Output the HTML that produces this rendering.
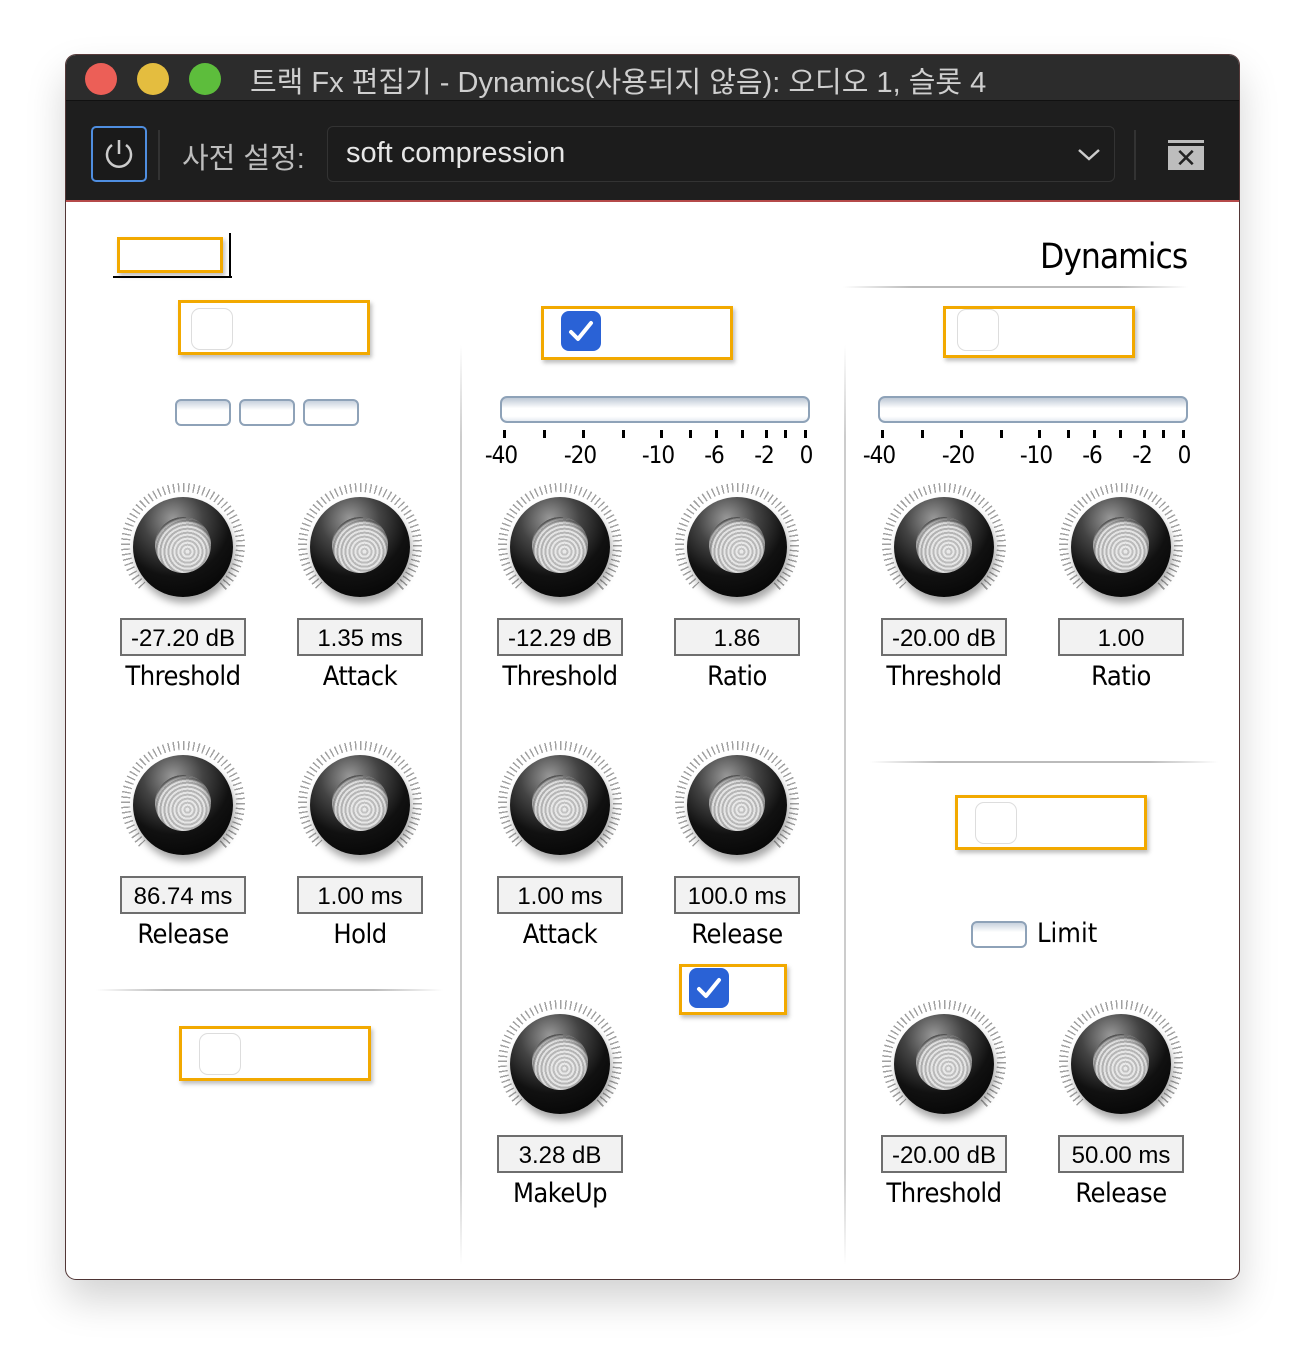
<!DOCTYPE html>
<html><head><meta charset="utf-8"><style>
*{box-sizing:border-box;margin:0;padding:0}
body{width:1305px;height:1357px;background:#fff;position:relative;overflow:hidden;font-family:"Liberation Sans","Noto Sans CJK KR",sans-serif}
.a{position:absolute}
.win{left:66px;top:55px;width:1173px;height:1224px;border-radius:10px;background:#fff;box-shadow:0 20px 40px rgba(0,0,0,.18),0 0 0 1px #5a3c3c;overflow:hidden}
.title{left:0;top:0;width:1173px;height:46px;background:#2c2c2c;border-bottom:1px solid #111}
.tool{left:0;top:46px;width:1173px;height:101px;background:#1e1e1e;border-bottom:2px solid #b54a4a}
.dot{width:32px;height:32px;border-radius:50%;top:8px}
.k{width:124px;height:124px;border-radius:50%;
background:conic-gradient(transparent 0 138deg,#fff 138deg 222deg,transparent 222deg),repeating-conic-gradient(#a0a0a0 0 1.4deg,transparent 1.4deg 5deg)}
.k::before{content:"";position:absolute;left:9px;top:9px;width:106px;height:106px;border-radius:50%;background:#fff}
.k .b{position:absolute;left:12px;top:14px;width:100px;height:100px;border-radius:50%;
background:radial-gradient(circle at 40% 22%,#9a9a9a 0,#444 30%,#111 58%,#000 100%);box-shadow:2px 6px 8px rgba(0,0,0,.35)}
.k .i{position:absolute;left:22px;top:20px;width:56px;height:56px;border-radius:50%;
background:radial-gradient(circle at 55% 60%,rgba(255,255,255,.35) 0,rgba(255,255,255,0) 70%),repeating-radial-gradient(circle at 58% 62%,#e0e0e0 0 2px,#a8a8a8 2px 4px);box-shadow:inset 0 3px 5px rgba(0,0,0,.6)}
.v{width:126px;height:38px;border:2px solid #6e6e6e;background:#f2f2f2;font-size:24px;text-align:center;line-height:38px;color:#000}
.l{width:180px;text-align:center;font-size:27px;color:#000;font-family:"DejaVu Sans Condensed","Liberation Sans Narrow","Liberation Sans",sans-serif;letter-spacing:-0.5px}
.ob{border:3px solid #f2a900;box-shadow:2px 3px 4px rgba(0,0,0,.25)}
.cb{width:42px;height:42px;border-radius:9px;border:1px solid #ddd;background:#fff}
.cc{width:40px;height:40px;border-radius:8px;background:#2a62d6}
.btn{height:27px;border-radius:6px;border:2px solid #8ea2b8;background:linear-gradient(#c8d2de,#fff 40%,#fff)}
.bar{height:27px;border-radius:7px;border:2px solid #8ea2b8;background:linear-gradient(#bfc9d6,#fff 45%,#fff 80%,#e6ebf1)}
.tk{width:3px;height:8px;background:#000;top:430px}
.sl{font-size:24px;top:441px;width:50px;text-align:center;font-family:"DejaVu Sans Condensed","Liberation Sans",sans-serif;letter-spacing:-1px}
.hl{height:2px;background:linear-gradient(90deg,#fff,#bbb 20%,#bbb 80%,#fff)}
.vl{width:2px;background:linear-gradient(#fff,#ccc 10%,#ccc 90%,#fff)}
</style></head><body>
<div class="a win">
 <div class="a title"></div>
 <div class="a dot" style="left:19px;background:#ec5f57"></div>
 <div class="a dot" style="left:71px;background:#e4bd3f"></div>
 <div class="a dot" style="left:123px;background:#5dbd3c"></div>
 <div class="a" style="left:184px;top:4px;font-size:29px;color:#cfcfcf;white-space:nowrap">트랙 Fx 편집기 - Dynamics(사용되지 않음): 오디오 1, 슬롯 4</div>
 <div class="a tool"></div>
 <div class="a" style="left:25px;top:71px;width:56px;height:56px;border:2px solid #4f8ee0;border-radius:5px;background:#1a1a1a"></div>
 <svg class="a" style="left:35px;top:81px" width="36" height="36" viewBox="0 0 36 36"><path d="M11 9 A12 12 0 1 0 25 9" fill="none" stroke="#ccc" stroke-width="2.5"/><line x1="18" y1="4" x2="18" y2="18" stroke="#ccc" stroke-width="2.5"/></svg>
 <div class="a" style="left:92px;top:75px;width:2px;height:50px;background:#333"></div>
 <div class="a" style="left:116px;top:80px;font-size:29px;color:#bdbdbd">사전 설정:</div>
 <div class="a" style="left:261px;top:71px;width:788px;height:56px;border:1px solid #333;border-radius:6px;background:#1c1c1c"></div>
 <div class="a" style="left:280px;top:82px;font-size:29px;color:#e6e6e6">soft compression</div>
 <svg class="a" style="left:1010px;top:92px" width="26" height="16"><path d="M3 3 L13 12 L23 3" fill="none" stroke="#ccc" stroke-width="2.5"/></svg>
 <div class="a" style="left:1068px;top:75px;width:2px;height:50px;background:#333"></div>
 <div class="a" style="left:1102px;top:85px;width:36px;height:3px;background:#bbb"></div>
 <div class="a" style="left:1102px;top:91px;width:36px;height:24px;background:#bdbdbd;text-align:center;font-size:26px;line-height:24px;color:#222">✕</div>
</div>

<div class="a ob" style="left:117px;top:237px;width:106px;height:36px"></div>
<div class="a" style="left:113px;top:276px;width:119px;height:2px;background:#000"></div>
<div class="a" style="left:229px;top:233px;width:2px;height:45px;background:#000"></div>
<div class="a" style="left:1040px;top:237px;font-size:35px;font-family:'DejaVu Sans Condensed','Liberation Sans',sans-serif;letter-spacing:-1px">Dynamics</div>
<div class="a hl" style="left:843px;top:286px;width:345px"></div>

<div class="a ob" style="left:178px;top:300px;width:192px;height:55px"></div>
<div class="a cb" style="left:191px;top:308px"></div>
<div class="a ob" style="left:541px;top:306px;width:192px;height:54px"></div>
<div class="a cc" style="left:561px;top:311px"><svg width="40" height="40"><path d="M10 21 L17 28 L30 12" fill="none" stroke="#fff" stroke-width="4" stroke-linecap="round" stroke-linejoin="round"/></svg></div>
<div class="a ob" style="left:943px;top:306px;width:192px;height:52px"></div>
<div class="a cb" style="left:957px;top:309px"></div>

<div class="a btn" style="left:175px;top:399px;width:56px"></div>
<div class="a btn" style="left:239px;top:399px;width:56px"></div>
<div class="a btn" style="left:303px;top:399px;width:56px"></div>

<div class="a vl" style="left:460px;top:345px;height:920px"></div>
<div class="a vl" style="left:844px;top:345px;height:920px"></div>
<div class="a hl" style="left:96px;top:989px;width:347px"></div>
<div class="a hl" style="left:870px;top:761px;width:348px"></div>

<div class="a bar" style="left:500px;top:396px;width:310px"></div>
<div class="a bar" style="left:878px;top:396px;width:310px"></div>

<div class="a tk" style="left:503px"></div><div class="a tk" style="left:543px"></div><div class="a tk" style="left:582px"></div><div class="a tk" style="left:622px"></div><div class="a tk" style="left:660px"></div><div class="a tk" style="left:689px"></div><div class="a tk" style="left:715px"></div><div class="a tk" style="left:741px"></div><div class="a tk" style="left:765px"></div><div class="a tk" style="left:784px"></div><div class="a tk" style="left:804px"></div>
<div class="a sl" style="left:476px">-40</div><div class="a sl" style="left:555px">-20</div><div class="a sl" style="left:633px">-10</div><div class="a sl" style="left:689px">-6</div><div class="a sl" style="left:739px">-2</div><div class="a sl" style="left:781px">0</div>
<div class="a tk" style="left:881px"></div><div class="a tk" style="left:921px"></div><div class="a tk" style="left:960px"></div><div class="a tk" style="left:1000px"></div><div class="a tk" style="left:1038px"></div><div class="a tk" style="left:1067px"></div><div class="a tk" style="left:1093px"></div><div class="a tk" style="left:1119px"></div><div class="a tk" style="left:1143px"></div><div class="a tk" style="left:1162px"></div><div class="a tk" style="left:1182px"></div>
<div class="a sl" style="left:854px">-40</div><div class="a sl" style="left:933px">-20</div><div class="a sl" style="left:1011px">-10</div><div class="a sl" style="left:1067px">-6</div><div class="a sl" style="left:1117px">-2</div><div class="a sl" style="left:1159px">0</div>

<div class="a k" style="left:121px;top:483px"><div class="b"><div class="i"></div></div></div>
<div class="a k" style="left:298px;top:483px"><div class="b"><div class="i"></div></div></div>
<div class="a k" style="left:498px;top:483px"><div class="b"><div class="i"></div></div></div>
<div class="a k" style="left:675px;top:483px"><div class="b"><div class="i"></div></div></div>
<div class="a k" style="left:882px;top:483px"><div class="b"><div class="i"></div></div></div>
<div class="a k" style="left:1059px;top:483px"><div class="b"><div class="i"></div></div></div>
<div class="a v" style="left:120px;top:618px">-27.20 dB</div>
<div class="a v" style="left:297px;top:618px">1.35 ms</div>
<div class="a v" style="left:497px;top:618px">-12.29 dB</div>
<div class="a v" style="left:674px;top:618px">1.86</div>
<div class="a v" style="left:881px;top:618px">-20.00 dB</div>
<div class="a v" style="left:1058px;top:618px">1.00</div>
<div class="a l" style="left:93px;top:661px">Threshold</div>
<div class="a l" style="left:270px;top:661px">Attack</div>
<div class="a l" style="left:470px;top:661px">Threshold</div>
<div class="a l" style="left:647px;top:661px">Ratio</div>
<div class="a l" style="left:854px;top:661px">Threshold</div>
<div class="a l" style="left:1031px;top:661px">Ratio</div>

<div class="a k" style="left:121px;top:741px"><div class="b"><div class="i"></div></div></div>
<div class="a k" style="left:298px;top:741px"><div class="b"><div class="i"></div></div></div>
<div class="a k" style="left:498px;top:741px"><div class="b"><div class="i"></div></div></div>
<div class="a k" style="left:675px;top:741px"><div class="b"><div class="i"></div></div></div>
<div class="a v" style="left:120px;top:876px">86.74 ms</div>
<div class="a v" style="left:297px;top:876px">1.00 ms</div>
<div class="a v" style="left:497px;top:876px">1.00 ms</div>
<div class="a v" style="left:674px;top:876px">100.0 ms</div>
<div class="a l" style="left:93px;top:919px">Release</div>
<div class="a l" style="left:270px;top:919px">Hold</div>
<div class="a l" style="left:470px;top:919px">Attack</div>
<div class="a l" style="left:647px;top:919px">Release</div>

<div class="a ob" style="left:955px;top:795px;width:192px;height:55px"></div>
<div class="a cb" style="left:975px;top:802px"></div>
<div class="a btn" style="left:971px;top:921px;width:56px"></div>
<div class="a" style="left:1037px;top:918px;font-size:27px;font-family:'DejaVu Sans Condensed','Liberation Sans',sans-serif">Limit</div>

<div class="a ob" style="left:679px;top:964px;width:108px;height:51px"></div>
<div class="a cc" style="left:689px;top:968px"><svg width="40" height="40"><path d="M10 21 L17 28 L30 12" fill="none" stroke="#fff" stroke-width="4" stroke-linecap="round" stroke-linejoin="round"/></svg></div>
<div class="a ob" style="left:179px;top:1026px;width:192px;height:55px"></div>
<div class="a cb" style="left:199px;top:1033px"></div>

<div class="a k" style="left:498px;top:1000px"><div class="b"><div class="i"></div></div></div>
<div class="a k" style="left:882px;top:1000px"><div class="b"><div class="i"></div></div></div>
<div class="a k" style="left:1059px;top:1000px"><div class="b"><div class="i"></div></div></div>
<div class="a v" style="left:497px;top:1135px">3.28 dB</div>
<div class="a v" style="left:881px;top:1135px">-20.00 dB</div>
<div class="a v" style="left:1058px;top:1135px">50.00 ms</div>
<div class="a l" style="left:470px;top:1178px">MakeUp</div>
<div class="a l" style="left:854px;top:1178px">Threshold</div>
<div class="a l" style="left:1031px;top:1178px">Release</div>
</body></html>
